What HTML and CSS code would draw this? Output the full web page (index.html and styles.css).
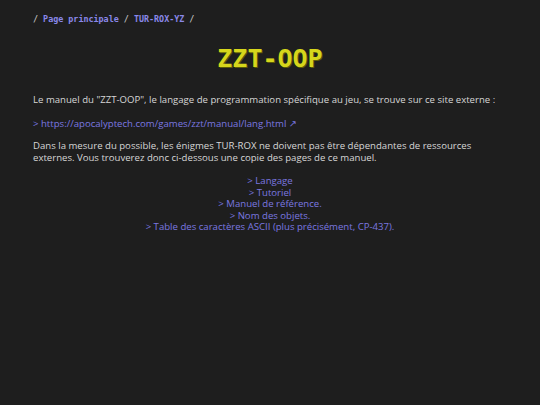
FILE: index.html
```html
<!DOCTYPE html>
<html lang="fr">
<head>
<meta charset="utf-8">
<title>ZZT-OOP</title>
<link rel="stylesheet" href="styles.css">
</head>
<body>
<div class="page">
  <nav class="crumbs"><span class="sep">/</span> <a href="#">Page principale</a> <span class="sep">/</span> <a href="#">TUR-ROX-YZ</a> <span class="sep">/</span></nav>
  <h1 class="title">ZZT-OOP</h1>
  <p class="text first">Le manuel du "ZZT-OOP", le langage de programmation spécifique au jeu, se trouve sur ce site externe :</p>
  <p class="text"><a href="#">&gt; https://apocalyptech.com/games/zzt/manual/lang.html ↗</a></p>
  <p class="text">Dans la mesure du possible, les énigmes TUR-ROX ne doivent pas être dépendantes de ressources externes. Vous trouverez donc ci-dessous une copie des pages de ce manuel.</p>
  <ul class="links">
    <li><a href="#">&gt; Langage</a></li>
    <li><a href="#">&gt; Tutoriel</a></li>
    <li><a href="#">&gt; Manuel de référence.</a></li>
    <li><a href="#">&gt; Nom des objets.</a></li>
    <li><a href="#">&gt; Table des caractères ASCII (plus précisément, CP-437).</a></li>
  </ul>
</div>
</body>
</html>
```
FILE: styles.css
```css
html, body {
  margin: 0;
  padding: 0;
  background: #1e1e1e;
}
.page {
  padding: 13px 33px 0 33px;
  font-family: "Open Sans", "DejaVu Sans", sans-serif;
  font-size: 9.6px;
  color: #d6d6d6;
}
a {
  color: #7b78e0;
  text-decoration: none;
}
.crumbs {
  font-family: "DejaVu Sans Mono", "Liberation Mono", monospace;
  font-weight: bold;
  font-size: 8.4px;
  line-height: 12px;
  color: #cfcfcf;
}
.crumbs a {
  color: #8a88ea;
}
.crumbs .sep {
  color: #bdbdbd;
}
.title {
  margin: 19px 0 20px 0;
  text-align: center;
  font-family: "DejaVu Sans Mono", "Liberation Mono", monospace;
  font-weight: bold;
  font-size: 25px;
  line-height: 30px;
  color: #d6d61c;
  text-shadow: 1px 1px 0 #5a5a08;
}
.text {
  margin: 0 0 10px 0;
  line-height: 12px;
}
.text.first {
  margin-bottom: 12px;
}
.links {
  list-style: none;
  margin: 11px 0 0 0;
  padding: 0;
  text-align: center;
  line-height: 11.6px;
}
```
